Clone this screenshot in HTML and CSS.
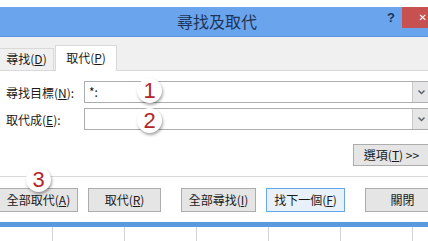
FILE: index.html
```html
<!DOCTYPE html>
<html lang="zh-Hant">
<head>
  <meta charset="UTF-8">
  <title>尋找及取代</title>
  <link rel="stylesheet" href="styles.css">
</head>
<body>
  <div class="dialog">
    <div class="titlebar">
      <span class="title">尋找及取代</span>
      <span class="help">?</span>
      <span class="close">✕</span>
    </div>

    <div class="tabs">
      <div class="tab">尋找(<u>D</u>)</div>
      <div class="tab active">取代(<u>P</u>)</div>
    </div>

    <div class="panel">
      <div class="row">
        <label class="label">尋找目標(<u>N</u>):</label>
        <div class="combo">
          <div class="field">*:</div>
          <div class="drop">
            <svg width="13" height="20" viewBox="0 0 13 20"><polyline points="3.5,8.5 6.5,11.5 9.5,8.5" fill="none" stroke="#5b6472" stroke-width="1.5"/></svg>
          </div>
        </div>
      </div>
      <div class="row">
        <label class="label">取代成(<u>E</u>):</label>
        <div class="combo">
          <div class="field"></div>
          <div class="drop">
            <svg width="13" height="20" viewBox="0 0 13 20"><polyline points="3.5,8.5 6.5,11.5 9.5,8.5" fill="none" stroke="#5b6472" stroke-width="1.5"/></svg>
          </div>
        </div>
      </div>
      <div class="options-row">
        <button class="btn options">選項(<u>T</u>) &gt;&gt;</button>
      </div>
    </div>

    <div class="actions">
      <div class="group">
        <button class="btn replace-all">全部取代(<u>A</u>)</button>
        <button class="btn replace">取代(<u>R</u>)</button>
      </div>
      <div class="group">
        <button class="btn find-all">全部尋找(<u>I</u>)</button>
        <button class="btn find-next focused">找下一個(<u>F</u>)</button>
      </div>
      <div class="group">
        <button class="btn close-btn">關閉</button>
      </div>
    </div>

    <span class="badge badge-1">1</span>
    <span class="badge badge-2">2</span>
    <span class="badge badge-3">3</span>
  </div>

  <div class="sheet-bar"></div>
  <div class="sheet">
    <div class="cell first"></div>
    <div class="cell"></div>
    <div class="cell"></div>
    <div class="cell"></div>
    <div class="cell"></div>
    <div class="cell"></div>
  </div>
</body>
</html>
```

FILE: styles.css
```css
body {
  margin: 0;
  width: 428px;
  height: 241px;
  overflow: hidden;
  background: #fff;
  font-family: "Noto Sans CJK TC", sans-serif;
  font-size: 12px;
  color: #1a1a1a;
}
.dialog {
  position: relative;
  width: 449px;
  padding-top: 7px;
}
.titlebar {
  height: 29px;
  background: #6aa4ec;
  border-bottom: 1px solid #5a92dc;
  display: flex;
  align-items: flex-start;
}
.title {
  flex: 1;
  padding-left: 47px;
  text-align: center;
  font-size: 16px;
  line-height: 29px;
  color: #1d3558;
}
.help {
  width: 15px;
  font-family: "Liberation Sans", sans-serif;
  font-weight: bold;
  font-size: 13px;
  line-height: 22px;
  color: #1d3558;
}
.close {
  width: 47px;
  height: 21px;
  padding-right: 22px;
  box-sizing: border-box;
  background: #c75050;
  color: #fff;
  font-family: "DejaVu Sans", sans-serif;
  font-weight: bold;
  font-size: 10px;
  line-height: 21px;
  text-align: right;
}
.tabs {
  height: 33px;
  background: #f0f0f0;
  display: flex;
  align-items: flex-end;
}
.tab {
  height: 21px;
  width: 53px;
  margin-left: -1px;
  border: 1px solid #d9d9d9;
  border-bottom: none;
  background: #f0f0f0;
  text-align: center;
  line-height: 20px;
}
.tab.active {
  height: 25px;
  width: 60px;
  margin-left: 1px;
  margin-bottom: -1px;
  background: #fff;
  line-height: 23px;
  position: relative;
}
.panel {
  border-top: 1px solid #d9d9d9;
  border-bottom: 1px solid #d9d9d9;
  padding: 10px 19px 10px 0;
}
.row {
  display: flex;
  align-items: center;
  height: 22px;
}
.row + .row {
  margin-top: 5px;
}
.label {
  width: 84px;
  padding-left: 6px;
  box-sizing: border-box;
}
.combo {
  flex: 1;
  display: flex;
  height: 22px;
  box-sizing: border-box;
  border: 1px solid #abadb3;
  background: #fff;
}
.field {
  flex: 1;
  padding-left: 4px;
  line-height: 19px;
}
.drop {
  width: 16px;
  background: #e6e6e6;
  border-left: 1px solid #c9c9c9;
  display: flex;
  justify-content: center;
}
.options-row {
  display: flex;
  justify-content: flex-end;
  margin-top: 14px;
}
.btn {
  font-family: "Noto Sans CJK TC", sans-serif;
  font-size: 12px;
  color: #1a1a1a;
  background: #e5e5e5;
  border: 1px solid #acacac;
  height: 24px;
  padding: 0;
  line-height: 20px;
}
.options {
  width: 77px;
  height: 22px;
}
.actions {
  display: flex;
  gap: 20px;
  padding: 11px 0 10px 0;
  margin-left: -1px;
}
.group {
  display: flex;
  gap: 10px;
}
.replace-all { width: 79px; }
.replace { width: 73px; }
.find-all { width: 75px; }
.find-next { width: 79px; }
.close-btn { width: 75px; }
.btn.focused {
  border-color: #6aa6e6;
  background: #e8f1fa;
}
.badge {
  position: absolute;
  width: 25px;
  height: 25px;
  border-radius: 50%;
  background: #fff;
  box-shadow: 1px 2px 3px rgba(0, 0, 0, 0.35);
  color: #b3262c;
  font-family: "Liberation Sans", sans-serif;
  font-size: 22px;
  line-height: 25px;
  text-align: center;
}
.badge-1 { left: 137px; top: 78px; }
.badge-2 { left: 137px; top: 108px; }
.badge-3 { left: 26px; top: 167px; }
.sheet-bar {
  height: 5px;
  background: #5a9be0;
}
.sheet {
  display: flex;
  height: 14px;
}
.cell {
  width: 72px;
  flex: none;
  box-sizing: border-box;
  border-right: 1px solid #d4d4d4;
}
.cell.first {
  width: 53px;
}
```
